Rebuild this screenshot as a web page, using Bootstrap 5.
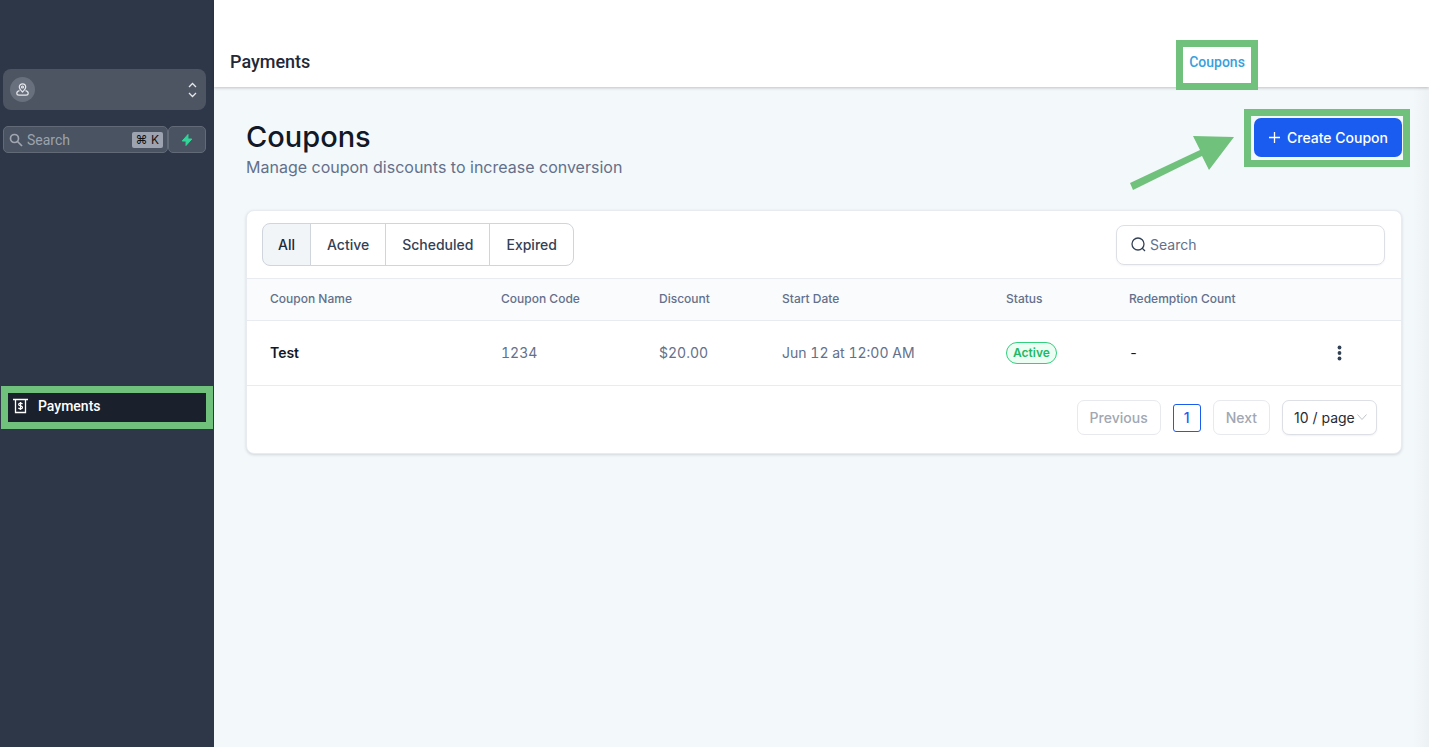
<!DOCTYPE html>
<html lang="en">
<head>
<meta charset="utf-8">
<meta name="viewport" content="width=device-width, initial-scale=1">
<title>Payments - Coupons</title>
<link rel="stylesheet" href="https://cdn.jsdelivr.net/npm/bootstrap@5.3.0/dist/css/bootstrap.min.css">
<style>
  :root { --callout: #70c17c; --slate: #64708a; --line: #e8ecf0; }
  body { font-family: Inter, "Liberation Sans", sans-serif; font-size: 14px; line-height: 20px; background: #f3f8fb; color: #111827; }
  button, input, select { font: inherit; }
  svg { display: block; flex: none; }
  .side { width: 214px; background: #2e3748; font-family: Roboto, "Liberation Sans", sans-serif; padding-top: 69px; }
  .switcher { height: 41px; margin: 0 8px 16px 3px; padding: 0 9px 0 7px; border: 0; border-radius: 8px; background: #4d5563; color: #e5e7eb; }
  .switcher-pin { width: 25px; height: 25px; border-radius: 50%; background: #68707d; }
  .side-search { margin: 0 8px 0 3px; }
  .side-field, .side-bolt { height: 27px; border: 1px solid #626a78; border-radius: 5px; background: #4a5361; }
  .side-field { padding: 0 4px 0 5px; gap: 4px; color: #a0a7b2; }
  .side-field input { width: 0; background: none; border: 0; outline: 0; padding: 0; color: inherit; }
  .side-field input::placeholder { color: #9ca3af; opacity: 1; }
  .side-field kbd { background: #9ea3b1; color: #111; font: 12px/16px Inter, sans-serif; padding: 0 4px; border-radius: 2px; }
  .side-bolt { width: 38px; padding: 0; }
  .side-nav { margin: 233px 1px 0 1px; }
  .side-link { height: 43px; border: 7px solid var(--callout); background: #1a202c; color: #fff; font-weight: 500; padding: 0 4px 4px 5px; gap: 10px; }
  .content-col { min-width: 0; background: linear-gradient(to left, #edf1f4, #f3f8fb 16px); }
  .topbar { height: 87px; background: #fff; padding: 36px 171px 0 16px; box-shadow: 0 1px 3px rgba(0,0,0,.22); position: relative; }
  .topbar h1 { font: 500 18px/24px Roboto, sans-serif; color: #1f2937; margin: 14px 0 0; }
  .tab { margin-top: 4px; width: 82px; height: 50px; border: 7px solid var(--callout); background: #fff; color: #3a9fdb; font: 500 14px/20px Roboto, sans-serif; padding-top: 5px; }
  .page { padding: 31px 27px 32px 32px; }
  .page h2 { font-size: 29px; line-height: 38px; font-weight: 500; margin: 0; }
  .page-sub { font-size: 16px; line-height: 22px; color: var(--slate); margin: 0 0 32px; }
  .create { width: 148px; height: 39px; border: 0; border-radius: 7px; background: #1b5cf0; color: #fff; font-weight: 500; padding: 0; gap: 6px; }
  .create-frame { position: absolute; inset: -9px -8px -10px -10px; border: 7px solid var(--callout); pointer-events: none; }
  .create-arrow { position: absolute; right: 168px; top: 14px; pointer-events: none; }
  .panel { background: #fff; border: 1px solid var(--line); border-radius: 8px; box-shadow: 0 1px 3px rgba(16,24,40,.15); }
  .panel-tools { padding: 12px 16px 12px 15px; }
  .filters .btn { height: 43px; padding: 0 16px; border: 1px solid #cfd4dd; font-size: 14px; line-height: 24px; font-weight: 500; color: #334155; background: #fff; border-radius: 8px; }
  .filters .btn.active { padding: 0 15px; background: #f1f5f8; color: #1d2939; border-color: #cfd4dd; }
  .find { width: 269px; height: 40px; border: 1px solid #dcdfe5; border-radius: 8px; box-shadow: 0 1px 2px rgba(16,24,40,.05); padding: 0 14px; gap: 4px; color: #334155; }
  .find input { border: 0; outline: 0; padding: 0; width: 0; background: none; }
  .find input::placeholder { color: #64708a; opacity: 1; }
  .coupons { table-layout: fixed; width: 100%; min-width: 1100px; }
  .coupons th, .coupons td { padding: 0 23px; border-top: 1px solid var(--line); }
  .coupons thead th { height: 42px; padding-bottom: 2px; background: #f9fbfd; font-size: 12px; font-weight: 500; color: var(--slate); }
  .coupons tbody th, .coupons tbody td { height: 65px; border-bottom: 1px solid var(--line); color: var(--slate); font-variant-numeric: tabular-nums; }
  .coupons tbody th { font-weight: 600; color: #111827; }
  .coupons tbody .count { color: #111827; }
  .status { height: 22px; line-height: 20px; padding: 0 6px; border: 1px solid #32cf7d; border-radius: 11px; background: #ecfdf3; color: #1fb864; font-size: 12px; font-weight: 600; display: inline-block; }
  .plain { display: block; border: 0; background: none; padding: 0; color: #334155; }
  .pager { padding: 14px 24px 18px; gap: 12px; }
  .pager-btn { height: 35px; border: 1px solid #e7e9ed; border-radius: 7px; background: #fff; color: #a2a7b2; font-weight: 500; padding: 0 12px; }
  .pager-now { width: 28px; height: 28px; border: 1px solid #1b5cf0; border-radius: 3px; background: #fff; color: #1b5cf0; font-weight: 500; padding: 0; }
  .pager-size select { appearance: none; width: 95px; height: 35px; border: 1px solid #dcdfe5; border-radius: 7px; background: #fff; color: #262b33; padding: 0 0 0 11px; box-shadow: 0 1px 2px rgba(16,24,40,.06); }
  .pager-size svg { position: absolute; right: 10px; top: 13px; pointer-events: none; }
</style>
</head>
<body>
<div class="d-flex min-vh-100">
  <aside class="side flex-shrink-0 d-flex flex-column">
    <button class="switcher d-flex align-items-center justify-content-between" type="button" aria-label="Switch location">
      <span class="switcher-pin d-flex align-items-center justify-content-center">
        <svg width="13" height="13" viewBox="0 0 13 13" fill="none" stroke="currentColor" stroke-width="1.2"><path d="M6.5 9C4.3 6.800 3.300 5.500 3.300 4a3.200 3.200 0 0 1 6.400 0C9.700 5.500 8.700 6.800 6.500 9Z"/><circle cx="6.500" cy="4" r="1"/><path d="M3.500 7.600C1.800 8 .8 9 .8 10.200c0 1.300 1 1.900 2.200 1.900h7c1.200 0 2.200-.6 2.200-1.900 0-1.200-1-2.200-2.700-2.600"/></svg>
      </span>
      <svg width="9" height="16" viewBox="0 0 9 16" fill="none" stroke="currentColor" stroke-width="1.300"><path d="m1 5 3.500-3.500L8 5M1 11l3.500 3.500L8 11"/></svg>
    </button>
    <div class="side-search d-flex">
      <label class="side-field d-flex align-items-center flex-grow-1">
        <svg width="14" height="14" viewBox="0 0 14 14" fill="none" stroke="currentColor" stroke-width="1.700"><circle cx="5.500" cy="5.500" r="4"/><path d="m8.500 8.500 4.500 4.500"/></svg>
        <input class="flex-grow-1" type="search" placeholder="Search" aria-label="Search">
        <kbd>⌘ K</kbd>
      </label>
      <button class="side-bolt d-flex align-items-center justify-content-center" type="button" aria-label="Quick actions">
        <svg width="12" height="14" viewBox="0 0 12 14" fill="#34d399" stroke="#34d399" stroke-linejoin="round"><path d="M7 1.500 1.200 8h3.900L5 12.500 10.800 6H6.900Z"/></svg>
      </button>
    </div>
    <nav class="side-nav">
      <a class="side-link d-flex align-items-center text-decoration-none" href="#payments">
        <svg width="15" height="16" viewBox="0 0 15 16" fill="none" stroke="#fff"><path d="M0 1.500h15" stroke-width="1.500"/><path d="M2.500 1.500v13h10v-13" stroke-width="1.300"/><path d="M9.500 6.200c-.5-.7-1.200-1-2-1-1 0-1.900.5-1.900 1.300 0 2 3.900.9 3.900 2.900 0 .9-.9 1.400-2 1.400-.9 0-1.600-.3-2.100-1M7.500 4v8" stroke-width="1.200"/></svg>
        <span>Payments</span>
      </a>
    </nav>
  </aside>

  <div class="content-col flex-grow-1">
    <header class="topbar d-flex justify-content-between align-items-start">
      <h1>Payments</h1>
      <a class="tab d-block text-center text-decoration-none" href="#coupons">Coupons</a>
    </header>
    <main class="page">
      <div class="d-flex justify-content-between align-items-start">
        <div>
          <h2>Coupons</h2>
          <p class="page-sub">Manage coupon discounts to increase conversion</p>
        </div>
        <div class="position-relative flex-shrink-0">
          <button class="create d-flex align-items-center justify-content-center" type="button">
            <svg width="13" height="13" viewBox="0 0 13 13" stroke="currentColor" stroke-width="1.300"><path d="M6.500 1v11M1 6.500h11"/></svg>
            Create Coupon
          </button>
          <span class="create-frame"></span>
          <svg class="create-arrow" width="104" height="58" viewBox="0 0 104 58" fill="#70c17c"><path d="m0 51 70-33-7-14 41 1-25 33-7-14L3 58Z"/></svg>
        </div>
      </div>

      <section class="panel">
        <div class="panel-tools d-flex justify-content-between align-items-center">
          <div class="filters btn-group" role="group" aria-label="Coupon status">
            <button class="btn active" type="button">All</button>
            <button class="btn" type="button">Active</button>
            <button class="btn" type="button">Scheduled</button>
            <button class="btn" type="button">Expired</button>
          </div>
          <label class="find d-flex align-items-center">
            <svg width="15" height="15" viewBox="0 0 15 15" fill="none" stroke="currentColor" stroke-width="1.300"><circle cx="7" cy="7" r="6"/><path d="m11 11 3 3"/></svg>
            <input class="flex-grow-1" type="search" placeholder="Search" aria-label="Search coupons">
          </label>
        </div>
        <div class="table-responsive">
          <table class="coupons">
            <colgroup><col width="231"><col width="158"><col width="123"><col width="224"><col width="123"><col width="208"><col width="87"></colgroup>
            <thead>
              <tr><th>Coupon Name</th><th>Coupon Code</th><th>Discount</th><th>Start Date</th><th>Status</th><th>Redemption Count</th><th></th></tr>
            </thead>
            <tbody>
              <tr>
                <th scope="row">Test</th><td>1234</td><td>$20.00</td><td>Jun 12 at 12:00 AM</td>
                <td><span class="status">Active</span></td><td class="count">-</td>
                <td><button class="plain" type="button" aria-label="Coupon actions"><svg width="5" height="16" viewBox="0 0 5 16" fill="currentColor"><circle cx="2.500" cy="2.500" r="1.900"/><circle cx="2.500" cy="8" r="1.900"/><circle cx="2.500" cy="13.500" r="1.900"/></svg></button></td>
              </tr>
            </tbody>
          </table>
        </div>
        <div class="pager d-flex align-items-center justify-content-end">
          <button class="pager-btn" type="button">Previous</button>
          <button class="pager-now" type="button">1</button>
          <button class="pager-btn" type="button">Next</button>
          <label class="pager-size position-relative">
            <select aria-label="Rows per page"><option>10 / page</option></select>
            <svg width="10" height="8" viewBox="0 0 10 8" fill="none" stroke="#bfc3ca"><path d="m.5 1.500 4.500 5 4.500-5"/></svg>
          </label>
        </div>
      </section>
    </main>
  </div>
</div>
<script src="https://cdn.jsdelivr.net/npm/bootstrap@5.3.0/dist/js/bootstrap.bundle.min.js"></script>
</body>
</html>
